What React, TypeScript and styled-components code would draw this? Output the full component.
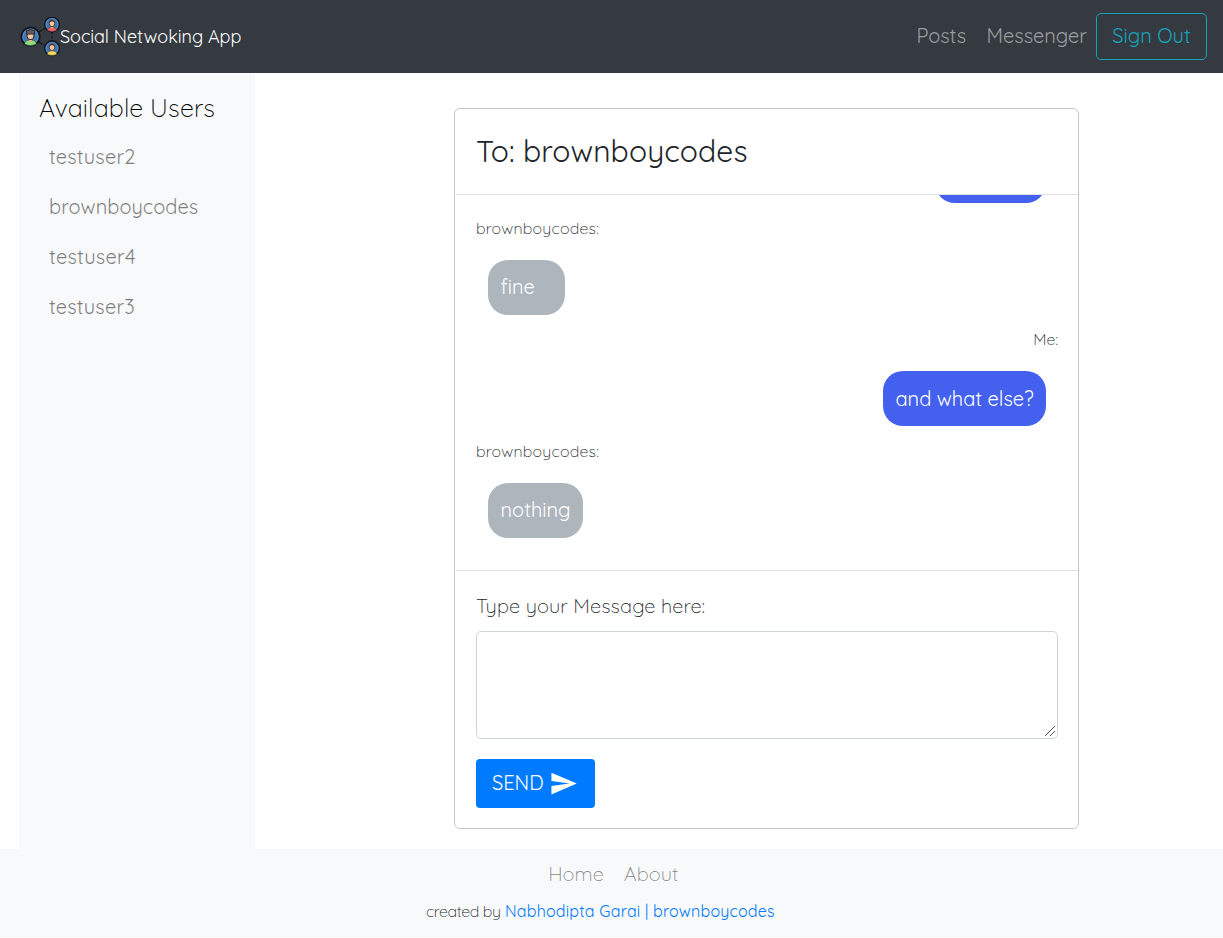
import React from "react";
import styled, { createGlobalStyle } from "styled-components";
import { MdSend } from "react-icons/md";

const GlobalStyle = createGlobalStyle`
  *, *::before, *::after { box-sizing: border-box; }
  body {
    margin: 0;
    background: #fff;
    color: #212529;
    font-family: Quicksand, Lato, sans-serif;
    font-size: 20px;
    font-weight: 300;
    line-height: 30px;
  }
  a { text-decoration: none; }
  ul { margin: 0; padding: 0; list-style: none; }
`;

const Page = styled.div`
  display: flex;
  flex-direction: column;
  height: 938px;
  overflow: hidden;
`;

const Navbar = styled.nav`
  display: flex;
  flex: none;
  align-items: center;
  justify-content: space-between;
  height: 73px;
  padding: 0 16px 0 20px;
  background: #343a40;
`;

const Brand = styled.a`
  display: flex;
  align-items: center;
  color: #fff;
  font-size: 18px;
  font-weight: 400;
  letter-spacing: -0.04px;
  white-space: nowrap;
`;

const NavLinks = styled.div`
  display: flex;
  align-items: center;
`;

const NavLink = styled.a<{ $width: number }>`
  width: ${(p) => p.$width}px;
  padding-bottom: 1px;
  color: rgba(255, 255, 255, 0.5);
  font-weight: 400;
`;

const SignOut = styled.button`
  width: 111px;
  height: 47px;
  padding: 0 0 1px;
  border: 1px solid #17a2b8;
  border-radius: 5px;
  background: transparent;
  color: #17a2b8;
  font: inherit;
  font-weight: 400;
`;

const Main = styled.main`
  display: flex;
  flex: none;
  height: 776px;
  padding-left: 19px;
`;

const Sidebar = styled.aside`
  width: 236px;
  padding: 20px 20px 0;
  background: #f8f9fa;
`;

const SidebarTitle = styled.h2`
  margin: 0 0 9px;
  color: #000;
  font-size: 25px;
  font-weight: 300;
  letter-spacing: 0.14px;
  line-height: 30px;
`;

const UserItem = styled.li<{ $tracking: number }>`
  height: 50px;
  padding: 10px;
  color: rgba(0, 0, 0, 0.5);
  font-weight: 400;
  letter-spacing: ${(p) => p.$tracking}px;
`;

const Content = styled.section`
  padding: 35px 0 0 199px;
`;

const Card = styled.div`
  display: flex;
  flex-direction: column;
  width: 625px;
  height: 721px;
  border: 1px solid #c8c8ca;
  border-radius: 6px;
  background: #fff;
`;

const CardHeader = styled.header`
  height: 86px;
  margin-left: 1px;
  padding: 22px 20px 0;
  border-bottom: 1px solid #dee2e6;
  font-size: 30px;
  font-weight: 400;
  letter-spacing: 0.12px;
  line-height: 40px;
`;

const Messages = styled.div`
  display: flex;
  flex-direction: column;
  justify-content: flex-end;
  height: 376px;
  margin-left: 1px;
  padding: 0 20px 32.3px;
  overflow: hidden;
  border-bottom: 1px solid #dee2e6;
`;

const Message = styled.div<{ $mine?: boolean }>`
  display: flex;
  flex: none;
  flex-direction: column;
  justify-content: flex-end;
  align-items: ${(p) => (p.$mine ? "flex-end" : "flex-start")};
  height: 111.5px;
`;

const Sender = styled.div<{ $mine?: boolean }>`
  height: 24px;
  margin-bottom: 19.8px;
  font-size: 16px;
  letter-spacing: ${(p) => (p.$mine ? 0 : 0.2)}px;
  line-height: 24px;
`;

const Bubble = styled.div<{ $mine?: boolean; $width: number }>`
  width: ${(p) => p.$width}px;
  height: 55px;
  margin: 0 12px;
  padding: 12.5px 0 0 12.5px;
  border-radius: 20px;
  background: ${(p) => (p.$mine ? "#4361ee" : "#adb5bd")};
  color: #fff;
  font-weight: 400;
  white-space: nowrap;
`;

const Composer = styled.form`
  display: flex;
  flex-direction: column;
  align-items: flex-start;
  padding: 20px 20px 0 21px;
`;

const FieldLabel = styled.label`
  margin-bottom: 10px;
  letter-spacing: 0.09px;
`;

const InputFrame = styled.div`
  position: relative;
  height: 108px;
  margin-bottom: 20px;
`;

const MessageInput = styled.textarea`
  display: block;
  width: 582px;
  height: 108px;
  margin: 0;
  border: 1px solid #ced4da;
  border-radius: 5px;
  background: #fff;
  font: inherit;
  resize: none;
`;

const Grip = styled.svg`
  position: absolute;
  right: 3px;
  bottom: 3px;
  pointer-events: none;
`;

const SendButton = styled.button`
  display: flex;
  align-items: center;
  justify-content: space-between;
  width: 119px;
  height: 49px;
  padding: 0 17px 0 16px;
  border: 0;
  border-radius: 4px;
  background: #007bff;
  color: #fff;
  font: inherit;
  font-weight: 400;
  span { padding-bottom: 1px; }
`;

const Footer = styled.footer`
  flex: none;
  height: 88px;
  padding-top: 10px;
  background: #f8f9fa;
`;

const FooterLinks = styled.div`
  display: flex;
  gap: 20px;
  padding-left: 548.2px;
  a { color: rgba(0, 0, 0, 0.5); }
`;

const Credit = styled.div`
  display: flex;
  margin-top: 10px;
  padding-left: 426px;
  font-size: 16px;
  line-height: 24px;
  span { width: 79px; letter-spacing: -0.42px; }
  a { color: #007bff; font-weight: 400; letter-spacing: 0.2px; }
`;

type Person = { x: number; y: number; r: number; shirt: string; cap?: boolean };

const people: Person[] = [
  { x: 10.5, y: 19.7, r: 9.3, shirt: "#91dc7d", cap: true },
  { x: 32, y: 7.5, r: 7.4, shirt: "#f26068" },
  { x: 32, y: 31.3, r: 7.4, shirt: "#f8df5b" },
];

function Logo() {
  return (
    <svg width="40" height="40" viewBox="0 0 40 40" aria-hidden="true">
      <path d="M18 15.5 26 10.8M18 24.5l8 4.5" stroke="#101418" strokeWidth="1.3" strokeDasharray="5 1.2 2 1" />
      <path d="M32 15v10" stroke="#101418" strokeWidth="1.2" strokeDasharray="2.5 1.5" />
      {people.map(({ x, y, r, shirt, cap }) => (
        <g key={shirt} transform={`translate(${x} ${y}) scale(${r / 9})`}>
          <circle r="8.9" fill="#4278b4" stroke="#11161b" strokeWidth="1.8" />
          <circle r="7.4" fill="none" stroke="#6c9dd0" strokeWidth=".6" />
          <path d="M-5.6 7.4C-5.6 4-3 3.3 0 3.3S5.6 4 5.6 7.4Q0 10-5.6 7.4Z" fill={shirt} stroke="#1c2429" strokeWidth=".5" />
          <path d="M-1.5 1h3v3.2L0 5.3-1.5 4.2Z" fill="#e9ad85" />
          <ellipse cy="-1.2" rx="3.4" ry="3.9" fill="#f4c69f" stroke="#282426" strokeWidth="1" />
          {cap ? (
            <path d="M-4.2-5.8Q0-8 4.2-5.8L3.4-2.5H-3.4Z" fill="#67585a" stroke="#1d2024" strokeWidth=".8" />
          ) : (
            <path d="M-3.5-2.2Q-3.5-6 0-5.6T3.5-2.2Q2-4-.5-3.6T-3.5-2.2Z" fill="#4b3435" />
          )}
        </g>
      ))}
    </svg>
  );
}

const users = [
  { name: "testuser2", tracking: 0.17 },
  { name: "brownboycodes", tracking: 0.04 },
  { name: "testuser4", tracking: 0.25 },
  { name: "testuser3", tracking: 0.17 },
];

type ChatMessage = { id: number; mine?: boolean; sender?: string; text?: string; width: number };

const messages: ChatMessage[] = [
  { id: 1, mine: true, width: 111 },
  { id: 2, sender: "brownboycodes:", text: "fine", width: 77 },
  { id: 3, mine: true, sender: "Me:", text: "and what else?", width: 163 },
  { id: 4, sender: "brownboycodes:", text: "nothing", width: 95 },
];

export default function App() {
  return (
    <Page>
      <GlobalStyle />
      <Navbar>
        <Brand href="#">
          <Logo />
          Social Netwoking App
        </Brand>
        <NavLinks>
          <NavLink href="#" $width={70}>Posts</NavLink>
          <NavLink href="#" $width={109.6}>Messenger</NavLink>
          <SignOut>Sign Out</SignOut>
        </NavLinks>
      </Navbar>
      <Main>
        <Sidebar>
          <SidebarTitle>Available Users</SidebarTitle>
          <ul>
            {users.map((u) => <UserItem key={u.name} $tracking={u.tracking}>{u.name}</UserItem>)}
          </ul>
        </Sidebar>
        <Content>
          <Card>
            <CardHeader>To: brownboycodes</CardHeader>
            <Messages>
              {messages.map((m) => (
                <Message key={m.id} $mine={m.mine}>
                  {m.sender && <Sender $mine={m.mine}>{m.sender}</Sender>}
                  <Bubble $mine={m.mine} $width={m.width}>{m.text}</Bubble>
                </Message>
              ))}
            </Messages>
            <Composer>
              <FieldLabel htmlFor="message">Type your Message here:</FieldLabel>
              <InputFrame>
                <MessageInput id="message" />
                <Grip width="10" height="10" viewBox="0 0 10 10" shapeRendering="crispEdges">
                  <path d="M0 10 10 0M5 10l5-5" stroke="#555" strokeWidth="1" />
                </Grip>
              </InputFrame>
              <SendButton type="button">
                <span>SEND</span>
                <MdSend size={29} />
              </SendButton>
            </Composer>
          </Card>
        </Content>
      </Main>
      <Footer>
        <FooterLinks>
          <a href="#">Home</a>
          <a href="#">About</a>
        </FooterLinks>
        <Credit>
          <span>created by</span>
          <a href="#">Nabhodipta Garai | brownboycodes</a>
        </Credit>
      </Footer>
    </Page>
  );
}
